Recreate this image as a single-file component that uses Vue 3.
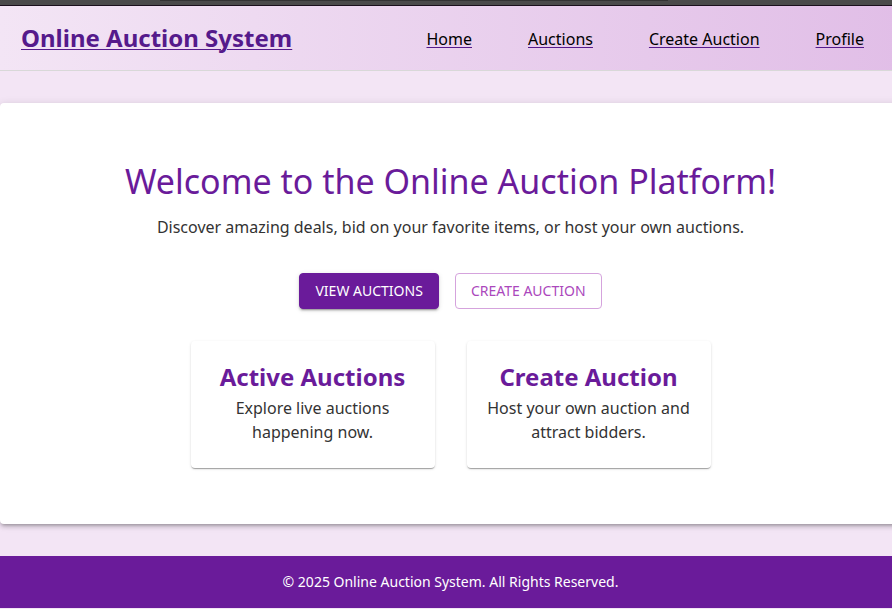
<script setup>
const links = ['Home', 'Auctions', 'Create Auction', 'Profile']
const cards = [
  { title: 'Active Auctions', text: 'Explore live auctions happening now.' },
  { title: 'Create Auction', text: 'Host your own auction and attract bidders.' },
]
</script>

<template>
  <div class="viewport">
    <div class="top-edge"><span class="top-mark"></span></div>
    <div class="page">
      <header class="header">
        <a class="brand" href="#">Online Auction System</a>
        <nav class="nav">
          <a v-for="link in links" :key="link" href="#"><span>{{ link }}</span></a>
        </nav>
      </header>
      <main class="hero">
        <h1>Welcome to the Online Auction Platform!</h1>
        <p class="lead">Discover amazing deals, bid on your favorite items, or host your own auctions.</p>
        <div class="actions">
          <button class="btn filled" type="button">VIEW AUCTIONS</button>
          <button class="btn outlined" type="button">CREATE AUCTION</button>
        </div>
        <div class="cards">
          <section v-for="card in cards" :key="card.title" class="card">
            <h2>{{ card.title }}</h2>
            <p>{{ card.text }}</p>
          </section>
        </div>
      </main>
      <footer class="footer">© 2025 Online Auction System. All Rights Reserved.</footer>
    </div>
  </div>
</template>

<style>
body {
  background: #f3e5f5;
}
</style>

<style scoped>
.viewport {
  overflow: hidden;
  font-family: "Noto Sans", sans-serif;
  font-size: 16px;
  line-height: 24px;
  color: #333;
}
.top-edge {
  display: flex;
  justify-content: center;
  height: 5px;
  background: #4a4a4a;
  border-bottom: 1px solid #1a0f1c;
}
.top-mark {
  width: 57%;
  height: 1px;
  margin-right: 64px;
  background: #333;
}
/* The page runs slightly past the right edge of the window. */
.page {
  width: calc(100% + 9px);
}
.header {
  display: flex;
  align-items: center;
  justify-content: space-between;
  box-sizing: border-box;
  height: 65px;
  padding: 0 37px 0 21px;
  background: linear-gradient(to right, #f3e5f5, #e1bee7);
  border-bottom: 1px solid #d8d8d8;
}
.brand {
  font-size: 24px;
  font-weight: 700;
  line-height: 32px;
  color: #551a8b;
  text-decoration-thickness: 1px;
  text-underline-offset: 2px;
}
.nav {
  display: flex;
  gap: 56px;
  padding-top: 2px;
}
.nav a {
  color: #551a8b;
  text-decoration-thickness: 1px;
  text-underline-offset: 2px;
}
.nav span {
  color: #000;
}
.hero {
  display: flex;
  flex-direction: column;
  align-items: center;
  margin: 32px 0;
  padding: 56px 24px;
  text-align: center;
  background: #fff;
  border-radius: 4px;
  box-shadow: 0 3px 3px -2px rgba(0, 0, 0, 0.2), 0 3px 4px 0 rgba(0, 0, 0, 0.14), 0 1px 8px 0 rgba(0, 0, 0, 0.12);
}
h1 {
  margin: 0 0 12px;
  font-size: 34px;
  font-weight: 400;
  line-height: 44px;
  color: #6a1b9a;
}
.lead {
  margin: 0 0 34px;
}
.actions {
  display: flex;
  gap: 16px;
  margin-bottom: 32px;
}
.btn {
  height: 36px;
  padding: 0 15px;
  font-family: inherit;
  font-size: 14px;
  line-height: 24px;
  border: 1px solid #6a1b9a;
  border-radius: 4px;
}
.filled {
  color: #fff;
  background: #6a1b9a;
  box-shadow: 0 3px 1px -2px rgba(0, 0, 0, 0.2), 0 2px 2px 0 rgba(0, 0, 0, 0.14), 0 1px 5px 0 rgba(0, 0, 0, 0.12);
}
.outlined {
  color: #ab47bc;
  background: #fff;
  border-color: #d5a3dd;
}
.cards {
  display: grid;
  grid-template-columns: 1fr 1fr;
  gap: 32px;
  width: 100%;
  max-width: 520px;
}
.card {
  padding: 24px 16px;
  border-radius: 4px;
  box-shadow: 0 2px 1px -1px rgba(0, 0, 0, 0.2), 0 1px 1px 0 rgba(0, 0, 0, 0.14), 0 1px 3px 0 rgba(0, 0, 0, 0.12);
}
.card h2 {
  margin: 0 0 7px;
  font-size: 24px;
  font-weight: 700;
  line-height: 24px;
  color: #6a1b9a;
}
.card p {
  margin: 0;
}
.footer {
  padding: 14px 16px;
  font-size: 14px;
  text-align: center;
  color: #fff;
  background: #6a1b9a;
}
</style>
